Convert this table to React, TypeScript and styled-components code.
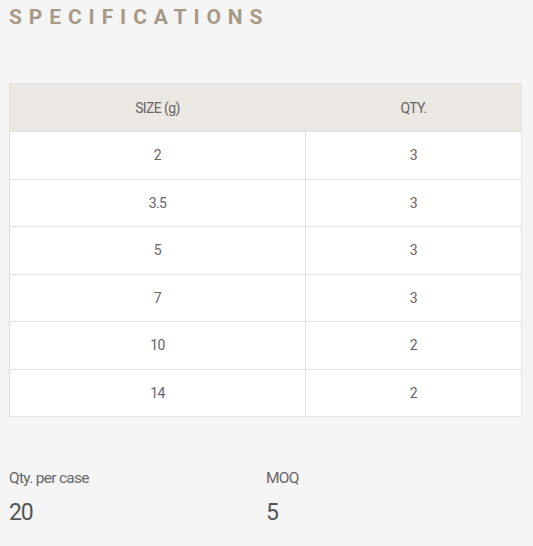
import React from "react";
import styled, { createGlobalStyle } from "styled-components";

const Global = createGlobalStyle`
  html, body { margin: 0; padding: 0; background: #f5f5f5; }
  body { font-family: Roboto, "Liberation Sans", sans-serif; }
`;

const Page = styled.div`
  width: 533px;
  height: 546px;
  box-sizing: border-box;
  padding: 5px 11px 0 9px;
  background: #f5f5f5;
  overflow: hidden;
`;

const Title = styled.h2`
  margin: 0;
  font-family: Roboto, "Liberation Sans", sans-serif;
  font-weight: 700;
  font-size: 21px;
  line-height: 24px;
  letter-spacing: 6.9px;
  color: #a79a86;
`;

const Table = styled.div`
  margin-top: 54px;
  display: grid;
  grid-template-columns: 296px 1fr;
  border: 1px solid #e2e2e2;
  background: #fff;
`;

const Cell = styled.div<{ $head?: boolean; $last?: boolean }>`
  height: ${(p) => (p.$head ? "47px" : "46.5px")};
  display: flex;
  align-items: center;
  justify-content: center;
  font-size: 14px;
  letter-spacing: -0.6px;
  color: #666;
  background: ${(p) => (p.$head ? "#ebe7e2" : "#fff")};
  border-bottom: 1px solid #e2e2e2;
  border-right: ${(p) => (p.$last ? "none" : "1px solid #e2e2e2")};
  &:nth-last-child(-n + 2) { border-bottom: none; }
`;

const Summary = styled.div`
  margin-top: 51px;
  display: grid;
  grid-template-columns: 257px 1fr;
`;

const Stat = styled.div`
  display: flex;
  flex-direction: column;
  gap: 12px;
`;

const Label = styled.div`
  font-size: 15.5px;
  letter-spacing: -0.7px;
  color: #666;
  line-height: 20px;
`;

const Value = styled.div`
  font-size: 23px;
  letter-spacing: -1.2px;
  color: #555;
  line-height: 26px;
`;

const rows: [string, string][] = [
  ["2", "3"],
  ["3.5", "3"],
  ["5", "3"],
  ["7", "3"],
  ["10", "2"],
  ["14", "2"],
];

export default function App() {
  return (
    <>
      <Global />
      <Page>
        <Title>SPECIFICATIONS</Title>
        <Table>
          <Cell $head>SIZE (g)</Cell>
          <Cell $head $last>QTY.</Cell>
          {rows.map(([s, q]) => (
            <React.Fragment key={s}>
              <Cell>{s}</Cell>
              <Cell $last>{q}</Cell>
            </React.Fragment>
          ))}
        </Table>
        <Summary>
          <Stat>
            <Label>Qty. per case</Label>
            <Value>20</Value>
          </Stat>
          <Stat>
            <Label>MOQ</Label>
            <Value>5</Value>
          </Stat>
        </Summary>
      </Page>
    </>
  );
}
